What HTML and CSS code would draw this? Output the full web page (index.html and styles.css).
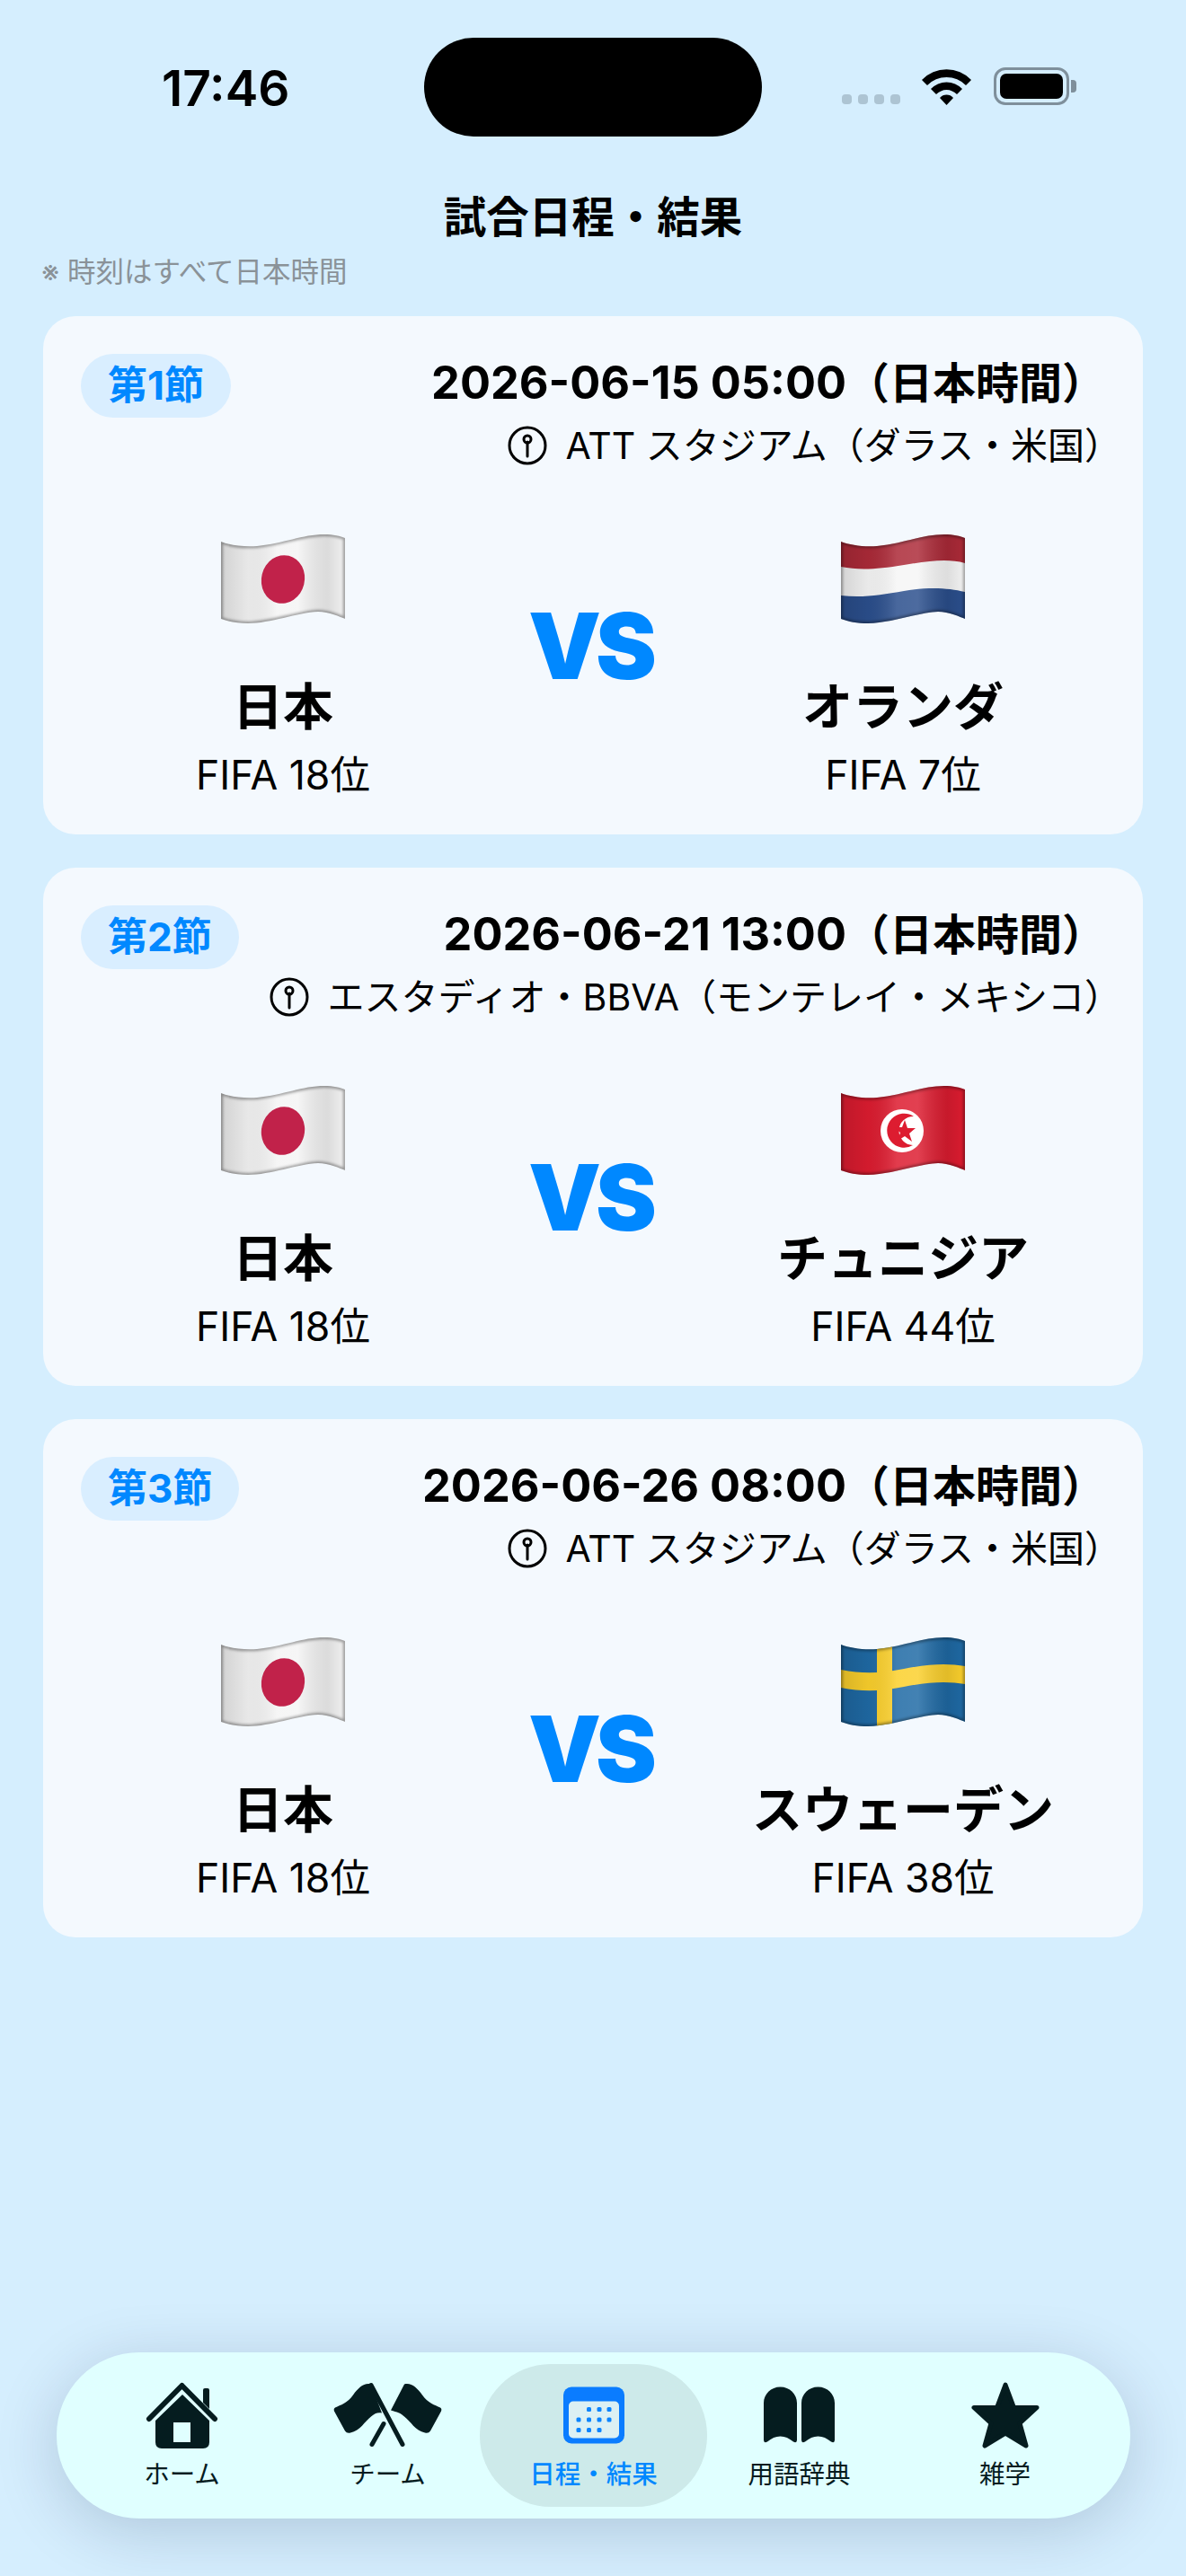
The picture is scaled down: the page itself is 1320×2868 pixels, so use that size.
FILE: index.html
```html
<!DOCTYPE html>
<html lang="ja">

<head>
  <meta charset="utf-8">
  <meta name="viewport" content="width=device-width, initial-scale=1">
  <title>試合日程・結果</title>
  <link rel="stylesheet" href="styles.css">
</head>

<body>
  <!-- shared flag shapes -->
  <svg class="defs" width="0" height="0" aria-hidden="true">
    <defs>
      <path id="wave" d="M0 8C10 12 25 14 40 13C70 10 90 0 115 0C125 0 133 2 138 4L138 94C133 92 120 86 108 86C85 87 55 99 30 99C18 99 8 97 0 94Z" />
      <clipPath id="waveClip"><use href="#wave" /></clipPath>
      <linearGradient id="sheen" x1="0" x2="1" y1="0" y2="0">
        <stop offset="0" stop-color="#000" stop-opacity=".14" />
        <stop offset=".22" stop-color="#000" stop-opacity=".05" />
        <stop offset=".45" stop-color="#fff" stop-opacity=".14" />
        <stop offset=".62" stop-color="#fff" stop-opacity=".16" />
        <stop offset=".86" stop-color="#000" stop-opacity=".1" />
        <stop offset="1" stop-color="#000" stop-opacity=".02" />
      </linearGradient>
      <filter id="soft"><feGaussianBlur stdDeviation="1.8" /></filter>
      <g id="finish">
        <use href="#wave" fill="url(#sheen)" />
        <g clip-path="url(#waveClip)">
          <use href="#wave" fill="none" stroke="#000" stroke-opacity=".36" stroke-width="4" filter="url(#soft)" />
        </g>
      </g>
      <symbol id="flag-jp" viewBox="0 0 138 100">
        <use href="#wave" fill="#f4f4f4" />
        <use href="#finish" />
        <ellipse cx="69" cy="50" rx="24" ry="27" transform="rotate(14 69 50)" fill="#c1224a" />
      </symbol>
      <symbol id="flag-nl" viewBox="0 0 138 100">
        <g clip-path="url(#waveClip)">
          <rect width="138" height="100" fill="#f6f6f6" />
          <path d="M0 0H138V32C120 27 100 29 70 34C40 39 20 40 0 36Z" fill="#ac2a38" />
          <path d="M0 68C25 71 45 67 70 63C100 58 120 60 138 64V100H0Z" fill="#2b4f8d" />
        </g>
        <use href="#finish" />
      </symbol>
      <symbol id="flag-tn" viewBox="0 0 138 100">
        <use href="#wave" fill="#dd1c30" />
        <use href="#finish" />
        <circle cx="68" cy="50" r="24" fill="#fff" />
        <path d="M81 34A19 19 0 1 0 80 66A15.500 15.500 0 1 1 81 34Z" fill="#dd1c30" />
        <polygon points="71,38 74,47 83,47 76,53 79,62 71,56 63,61 66,52 59,46 68,46" fill="#dd1c30" />
      </symbol>
      <symbol id="flag-se" viewBox="0 0 138 100">
        <use href="#wave" fill="#1f6aa5" />
        <g clip-path="url(#waveClip)">
          <path d="M0 36C25 41 45 40 70 35C100 29 120 29 138 32V52C120 49 100 49 70 55C45 60 25 61 0 56Z" fill="#fbd02c" />
          <rect x="40" width="17" height="100" fill="#fbd02c" />
        </g>
        <use href="#finish" />
      </symbol>
      <symbol id="pin" viewBox="0 0 44 44">
        <circle cx="22" cy="22" r="20" fill="none" stroke="#000" stroke-width="3" />
        <circle cx="22" cy="15" r="4" fill="none" stroke="#000" stroke-width="3" />
        <path d="M22 18V34" stroke="#000" stroke-width="3" stroke-linecap="round" />
      </symbol>
    </defs>
  </svg>

  <div class="screen">
    <header class="status">
      <span class="time">17:46</span>
      <span class="island"></span>
      <div class="status-right">
        <span class="signal"><i></i><i></i><i></i><i></i></span>
        <svg class="wifi" width="57" height="42" viewBox="0 0 57 42">
          <path d="M1 14A38 38 0 0 1 56 14L50 20A30 30 0 0 0 7 20Z" />
          <path d="M11 24A24 24 0 0 1 46 24L40 30A16 16 0 0 0 17 30Z" />
          <path d="M21 34A10 10 0 0 1 36 34L28.500 42Z" />
        </svg>
        <span class="battery"><i></i></span>
      </div>
    </header>

    <h1 class="title">試合日程・結果</h1>
    <p class="note">※ 時刻はすべて日本時間</p>

    <main class="matches">
      <section class="card">
        <div class="card-head">
          <span class="badge">第1節</span>
          <div class="info">
            <div class="date">2026-06-15 05:00<span class="jst">（日本時間）</span></div>
            <div class="place"><svg class="pin"><use href="#pin" /></svg>ATT スタジアム（ダラス・米国）</div>
          </div>
        </div>
        <div class="versus">
          <div class="team">
            <svg class="flag"><use href="#flag-jp" /></svg>
            <div class="team-name">日本</div>
            <div class="rank">FIFA 18位</div>
          </div>
          <div class="vs">VS</div>
          <div class="team">
            <svg class="flag"><use href="#flag-nl" /></svg>
            <div class="team-name">オランダ</div>
            <div class="rank">FIFA 7位</div>
          </div>
        </div>
      </section>

      <section class="card">
        <div class="card-head">
          <span class="badge">第2節</span>
          <div class="info">
            <div class="date">2026-06-21 13:00<span class="jst">（日本時間）</span></div>
            <div class="place"><svg class="pin"><use href="#pin" /></svg>エスタディオ・BBVA（モンテレイ・メキシコ）</div>
          </div>
        </div>
        <div class="versus">
          <div class="team">
            <svg class="flag"><use href="#flag-jp" /></svg>
            <div class="team-name">日本</div>
            <div class="rank">FIFA 18位</div>
          </div>
          <div class="vs">VS</div>
          <div class="team">
            <svg class="flag"><use href="#flag-tn" /></svg>
            <div class="team-name">チュニジア</div>
            <div class="rank">FIFA 44位</div>
          </div>
        </div>
      </section>

      <section class="card">
        <div class="card-head">
          <span class="badge">第3節</span>
          <div class="info">
            <div class="date">2026-06-26 08:00<span class="jst">（日本時間）</span></div>
            <div class="place"><svg class="pin"><use href="#pin" /></svg>ATT スタジアム（ダラス・米国）</div>
          </div>
        </div>
        <div class="versus">
          <div class="team">
            <svg class="flag"><use href="#flag-jp" /></svg>
            <div class="team-name">日本</div>
            <div class="rank">FIFA 18位</div>
          </div>
          <div class="vs">VS</div>
          <div class="team">
            <svg class="flag"><use href="#flag-se" /></svg>
            <div class="team-name">スウェーデン</div>
            <div class="rank">FIFA 38位</div>
          </div>
        </div>
      </section>
    </main>

    <nav class="tabs">
      <a class="tab">
        <svg class="tab-icon" width="81" height="74" viewBox="0 0 81 74">
          <path d="M64 23V9Q64 7 66 7H69Q71 7 71 9V30Z" />
          <path d="M4 41L40.500 4L77 41" fill="none" stroke="#051c1f" stroke-width="6" stroke-linecap="round" stroke-linejoin="round" />
          <path fill-rule="evenodd" d="M41 14L71 43V67Q71 74 64 74H18Q11 74 11 67V43ZM31 45V67H50V45Z" />
        </svg>
        <span>ホーム</span>
      </a>
      <a class="tab">
        <svg class="tab-icon" width="121" height="71" viewBox="0 0 121 71">
          <path d="M42 1C34 -1 28 5 22 13C16 22 8 24 2 27Q0 28 1 31L13 53Q15 56 19 55C30 53 35 42 42 37C46 33 50 32 54 33Z" />
          <path d="M79 1C87 -1 93 5 99 13C105 22 113 24 119 27Q121 28 120 31L108 53Q106 56 102 55C91 53 86 42 79 37C75 33 71 32 64 30Z" />
          <path d="M42 2L77 68M56 45L43 68" fill="none" stroke="#051c1f" stroke-width="5" stroke-linecap="round" />
        </svg>
        <span>チーム</span>
      </a>
      <a class="tab active">
        <svg class="tab-icon" width="68" height="63" viewBox="0 0 68 63">
          <rect width="68" height="63" rx="9" fill="#0a7cff" />
          <rect x="6" y="16" width="56" height="41" rx="5" fill="#dcf0f3" />
          <g fill="#0a84ff">
            <rect x="26" y="22.500" width="5" height="5" rx="1.500" />
            <rect x="37.500" y="22.500" width="5" height="5" rx="1.500" />
            <rect x="48.500" y="22.500" width="5" height="5" rx="1.500" />
            <rect x="14.500" y="34" width="5" height="5" rx="1.500" />
            <rect x="26" y="34" width="5" height="5" rx="1.500" />
            <rect x="37.500" y="34" width="5" height="5" rx="1.500" />
            <rect x="48.500" y="34" width="5" height="5" rx="1.500" />
            <rect x="14.500" y="45.500" width="5" height="5" rx="1.500" />
            <rect x="26" y="45.500" width="5" height="5" rx="1.500" />
            <rect x="37.500" y="45.500" width="5" height="5" rx="1.500" />
          </g>
        </svg>
        <span>日程・結果</span>
      </a>
      <a class="tab">
        <svg class="tab-icon" width="79" height="63" viewBox="0 0 79 63">
          <path d="M0 18C0 8 8 0 18.500 0C29 0 37 8 37 18V59Q37 63 33 61C28 57 24 55 18.500 55C13 55 9 57 4 61Q0 63 0 59Z" />
          <path d="M42 18C42 8 50 0 60.500 0C71 0 79 8 79 18V59Q79 63 75 61C70 57 66 55 60.500 55C55 55 51 57 46 61Q42 63 42 59Z" />
        </svg>
        <span>用語辞典</span>
      </a>
      <a class="tab">
        <svg class="tab-icon" width="76" height="74" viewBox="0 0 76 74">
          <path d="M38 3L47.500 28.500H73L54 46L61 71L38 57L15 71L22 46L3 28.500H28.500Z" stroke="#051c1f" stroke-width="5" stroke-linejoin="round" />
        </svg>
        <span>雑学</span>
      </a>
    </nav>
  </div>
</body>

</html>
```

FILE: styles.css
```css
* {
  box-sizing: border-box;
}

html,
body {
  margin: 0;
  padding: 0;
}

body {
  font-family: Inter, "Noto Sans CJK JP", sans-serif;
  background-color: #d5eefe;
  color: #000;
}

.defs {
  display: block;
  position: absolute;
}

.screen {
  width: 1320px;
  height: 2868px;
  display: flex;
  flex-direction: column;
  overflow: hidden;
}

/* status bar */
.status {
  height: 152px;
  padding: 42px 0 0 180px;
  display: flex;
  align-items: flex-start;
}

.time {
  width: 292px;
  margin-top: 26px;
  font-size: 55px;
  line-height: 60px;
  font-weight: 600;
}

.island {
  width: 376px;
  height: 110px;
  border-radius: 55px;
  background-color: #000;
}

.status-right {
  margin-left: 89px;
  margin-top: 33px;
  display: flex;
  align-items: flex-end;
}

.signal {
  display: flex;
  gap: 7px;
  margin-right: 23px;
  margin-bottom: 1px;
}

.signal i {
  width: 11px;
  height: 11px;
  border-radius: 4px;
  background-color: #adc4d3;
}

.wifi {
  fill: #000;
  margin-right: 24px;
}

.battery {
  position: relative;
  width: 84px;
  height: 42px;
  padding: 4px;
  border: 3px solid #7f8f9b;
  border-radius: 13px;
}

.battery::after {
  content: "";
  position: absolute;
  right: -11px;
  top: 11px;
  width: 6px;
  height: 14px;
  border-radius: 0 4px 4px 0;
  background-color: #7f8f9b;
}

.battery i {
  display: block;
  height: 100%;
  border-radius: 7px;
  background-color: #000;
}

/* heading */
.title {
  margin: 60px 0 0;
  text-align: center;
  font-size: 47.500px;
  line-height: 60px;
  font-weight: 700;
}

.note {
  margin: 5px 0 0;
  padding-left: 46px;
  font-size: 31.500px;
  line-height: 52px;
  color: #8a9298;
}

/* match cards */
.matches {
  margin-top: 23px;
  padding: 0 48px;
  display: flex;
  flex-direction: column;
  gap: 37px;
}

.card {
  height: 577px;
  padding: 35px 42px 0;
  border-radius: 36px;
  background-color: #f4f9fe;
}

.card-head {
  display: flex;
  justify-content: space-between;
  align-items: flex-start;
  height: 208px;
}

.badge {
  margin-top: 7px;
  height: 71px;
  padding: 0 30px;
  border-radius: 36px;
  background-color: #d9eeff;
  color: #0088ff;
  font-size: 44px;
  line-height: 71px;
  font-weight: 700;
}

.info {
  display: flex;
  flex-direction: column;
  align-items: flex-end;
}

.date {
  font-size: 50.500px;
  line-height: 78px;
  font-weight: 700;
}

.jst {
  font-size: 48px;
}

.place {
  display: flex;
  align-items: center;
  margin-right: -18px;
  font-size: 41px;
  line-height: 60px;
}

.pin {
  width: 44px;
  height: 44px;
  margin-right: 20px;
}

.versus {
  display: grid;
  grid-template-columns: 450px 1fr 450px;
  justify-items: center;
}

.team {
  display: flex;
  flex-direction: column;
  align-items: center;
  width: 100%;
}

.flag {
  width: 138px;
  height: 100px;
}

.team-name {
  margin-top: 57px;
  font-size: 56px;
  line-height: 70px;
  font-weight: 700;
}

.rank {
  margin-top: 11px;
  font-size: 44.500px;
  line-height: 60px;
}

.vs {
  margin-top: 59px;
  margin-right: 7px;
  font-size: 102px;
  line-height: 130px;
  font-weight: 900;
  color: #0088ff;
  letter-spacing: -6px;
}

/* tab bar */
.tabs {
  margin: auto 62px 64px 63px;
  height: 185px;
  padding: 13px 25px;
  display: grid;
  grid-template-columns: repeat(5, 1fr);
  border-radius: 92px;
  background-color: #e0ffff;
  box-shadow: 0 14px 70px rgba(0, 30, 60, 0.18);
}

.tab {
  display: flex;
  flex-direction: column;
  align-items: center;
  color: #051c1f;
  font-size: 28.500px;
  line-height: 40px;
}

.tab-icon {
  fill: #051c1f;
  height: 74px;
  margin-top: 20px;
  margin-bottom: 9px;
}

.tab.active {
  margin: 0 -12px;
  border-radius: 79px;
  background-color: #cdeaea;
  color: #0088ff;
  font-weight: 500;
}
```
